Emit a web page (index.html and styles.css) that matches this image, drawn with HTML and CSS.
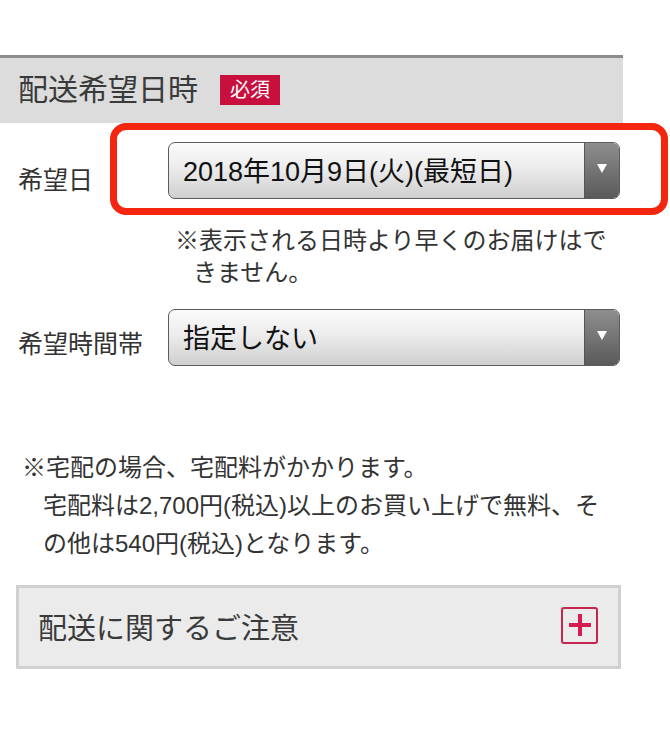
FILE: index.html
```html
<!DOCTYPE html>
<html lang="ja">
<head>
<meta charset="utf-8">
<title>配送希望日時</title>
<link rel="stylesheet" href="styles.css">
</head>
<body>
<div class="page">
  <section class="delivery">
    <header class="sec-head">
      <h2 class="sec-title">配送希望日時</h2>
      <span class="badge">必須</span>
    </header>
    <div class="form">
      <div class="row row-date">
        <label class="row-label">希望日</label>
        <div class="field">
          <div class="select">
            <span class="select-value">2018年10月9日(火)(最短日)</span>
            <span class="select-arrow"><span class="tri"></span></span>
          </div>
          <p class="field-note">※表示される日時より早くのお届けはできません。</p>
        </div>
      </div>
      <div class="row row-time">
        <label class="row-label">希望時間帯</label>
        <div class="field">
          <div class="select">
            <span class="select-value">指定しない</span>
            <span class="select-arrow"><span class="tri"></span></span>
          </div>
        </div>
      </div>
    </div>
    <p class="ship-note">※宅配の場合、宅配料がかかります。<br>宅配料は2,700円(税込)以上のお買い上げで無料、その他は540円(税込)となります。</p>
    <div class="accordion">
      <span class="acc-title">配送に関するご注意</span>
      <span class="acc-icon"><span class="plus"></span></span>
    </div>
  </section>
  <div class="highlight"></div>
</div>
</body>
</html>
```

FILE: styles.css
```css
* { box-sizing: border-box; }
html, body { margin: 0; padding: 0; background: #fff; }
body {
  font-family: "Liberation Sans", "Noto Sans CJK JP", sans-serif;
  color: #333;
  width: 670px;
  height: 755px;
  overflow: hidden;
}
.page { position: relative; padding-top: 55px; }

.sec-head {
  width: 623px;
  height: 68px;
  border-top: 3px solid #8c8c8c;
  background: #dcdcdc;
  display: flex;
  align-items: center;
  padding-left: 18px;
  padding-bottom: 2px;
}
.sec-title {
  margin: 0;
  font-size: 30px;
  font-weight: normal;
  color: #3a3a3a;
  line-height: 1;
}
.badge {
  margin-left: 22px;
  background: #c8103e;
  color: #fff;
  font-size: 20px;
  line-height: 30px;
  height: 30px;
  padding: 0 10px;
}

.form { padding: 19px 0 0 18px; }
.row { display: flex; align-items: flex-start; }
.row-label {
  width: 150px;
  font-size: 25px;
  color: #333;
  line-height: 1;
}
.row-date .row-label { padding-top: 26px; }
.row-time { margin-top: 20px; }
.row-time .row-label { padding-top: 23px; }

.field { width: 452px; }
.select {
  height: 57px;
  border: 1px solid #5c5c5c;
  border-radius: 7px;
  background: linear-gradient(#fbfbfb, #ececec 45%, #cfcfcf);
  display: flex;
  align-items: stretch;
  overflow: hidden;
}
.select-value {
  flex: 1;
  display: flex;
  align-items: center;
  padding-left: 14px;
  font-size: 27px;
  color: #111;
  padding-bottom: 2px;
}
.select-arrow {
  width: 35px;
  border-left: 1px solid #555;
  background: linear-gradient(#8e8e8e, #5a5a5a);
  display: flex;
  justify-content: center;
  padding-top: 21px;
}
.tri {
  width: 0;
  height: 0;
  border-left: 5px solid transparent;
  border-right: 5px solid transparent;
  border-top: 9px solid #fff;
}

.field-note {
  margin: 26px 0 0 7px;
  padding-left: 18px;
  text-indent: -18px;
  width: 445px;
  font-size: 24px;
  line-height: 32px;
  color: #333;
}

.ship-note {
  margin: 83px 0 0 22px;
  padding-left: 21px;
  text-indent: -21px;
  width: 582px;
  font-size: 24px;
  line-height: 38px;
  color: #333;
}

.accordion {
  margin: 22px 0 0 16px;
  width: 605px;
  height: 84px;
  border: 3px solid #d0d0d0;
  background: #ebebeb;
  display: flex;
  align-items: center;
  justify-content: space-between;
  padding: 0 20px 2px 19px;
}
.acc-title { font-size: 29px; color: #3a3a3a; }
.acc-icon {
  width: 37px;
  height: 37px;
  border: 2px solid #c4264f;
  border-radius: 3px;
  display: flex;
  align-items: center;
  justify-content: center;
  margin-bottom: 2px;
}
.plus { position: relative; width: 22px; height: 22px; }
.plus::before, .plus::after {
  content: "";
  position: absolute;
  background: #d81b50;
}
.plus::before { left: 0; right: 0; top: 9px; height: 4px; }
.plus::after { top: 0; bottom: 0; left: 9px; width: 4px; }

.highlight {
  position: absolute;
  left: 110px;
  top: 123px;
  width: 558px;
  height: 92px;
  border: 7px solid #f4260f;
  border-radius: 16px;
  pointer-events: none;
}
```
